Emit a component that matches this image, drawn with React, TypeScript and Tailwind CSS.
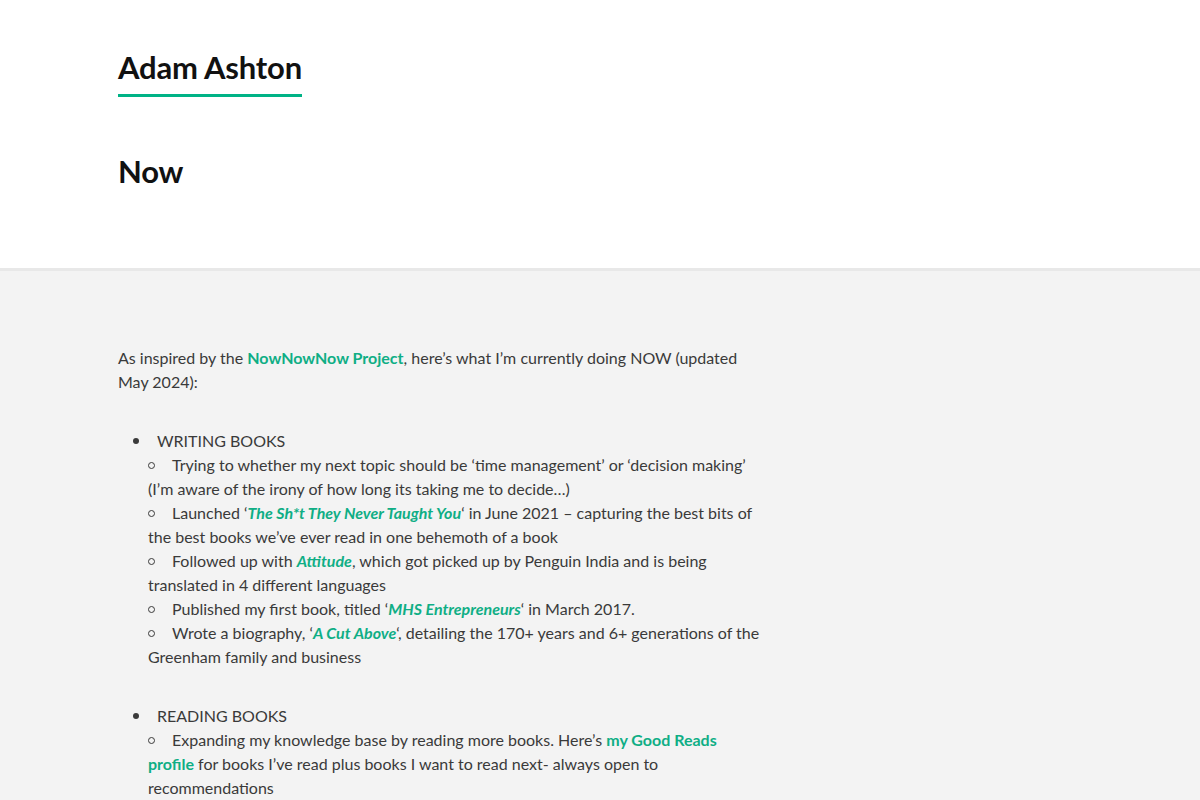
import React from "react";

const green = "text-[#0fae85]";

function Disc() {
  return <span className="inline-block w-[6px] h-[6px] rounded-full bg-[#3a3a3a] align-middle mr-[18px] -mt-[3px]" />;
}

function Circle() {
  return <span className="inline-block w-[7px] h-[7px] rounded-full border border-[#3a3a3a] align-middle mr-[17px] -mt-[3px]" />;
}

function Sub({ children }: { children: React.ReactNode }) {
  return (
    <li>
      <Circle />
      {children}
    </li>
  );
}

export default function App() {
  return (
    <div className="min-h-screen bg-[#f3f3f3] font-['Lato',sans-serif]">
      <header className="bg-white border-b-[3px] border-[#e8e8e8] h-[271px]">
        <div className="pl-[118px] pt-[48px]">
          <h1 className="inline-block text-[31px] leading-[38px] font-bold text-[#111] tracking-[-0.2px] border-b-[3px] border-[#00b386] pb-[8px]">
            Adam Ashton
          </h1>
          <h2 className="mt-[55px] text-[31px] leading-[38px] font-bold text-[#111] tracking-[-0.2px]">Now</h2>
        </div>
      </header>
      <main className="pl-[118px] pt-[75px] w-[762px] text-[16px] leading-[24px] text-[#3a3a3a]">
        <p>
          As inspired by the <a className={`${green} font-bold`}>NowNowNow Project</a>, here’s what I’m currently doing NOW
          (updated May 2024):
        </p>
        <ul className="mt-[35px] pl-[15px]">
          <li>
            <Disc />
            WRITING BOOKS
            <ul className="pl-[15px]">
              <Sub>
                Trying to whether my next topic should be ‘time management’ or ‘decision making’ (I’m aware of the irony of how long
                its taking me to decide…)
              </Sub>
              <Sub>
                Launched ‘<a className={`${green} font-bold italic`}>The Sh*t They Never Taught You</a>‘ in June 2021 – capturing the
                best bits of the best books we’ve ever read in one behemoth of a book
              </Sub>
              <Sub>
                Followed up with <a className={`${green} font-bold italic`}>Attitude</a>, which got picked up by Penguin India and is
                being translated in 4 different languages
              </Sub>
              <Sub>
                Published my first book, titled ‘<a className={`${green} font-bold italic`}>MHS Entrepreneurs</a>‘ in March 2017.
              </Sub>
              <Sub>
                Wrote a biography, ‘<a className={`${green} font-bold italic`}>A Cut Above</a>‘, detailing the 170+ years and 6+
                generations of the Greenham family and business
              </Sub>
            </ul>
          </li>
        </ul>
        <ul className="mt-[35px] pl-[15px]">
          <li>
            <Disc />
            READING BOOKS
            <ul className="pl-[15px]">
              <Sub>
                Expanding my knowledge base by reading more books. Here’s{" "}
                <a className={`${green} font-bold`}>my Good Reads profile</a> for books I’ve read plus books I want to read next-
                always open to recommendations
              </Sub>
            </ul>
          </li>
        </ul>
      </main>
    </div>
  );
}
